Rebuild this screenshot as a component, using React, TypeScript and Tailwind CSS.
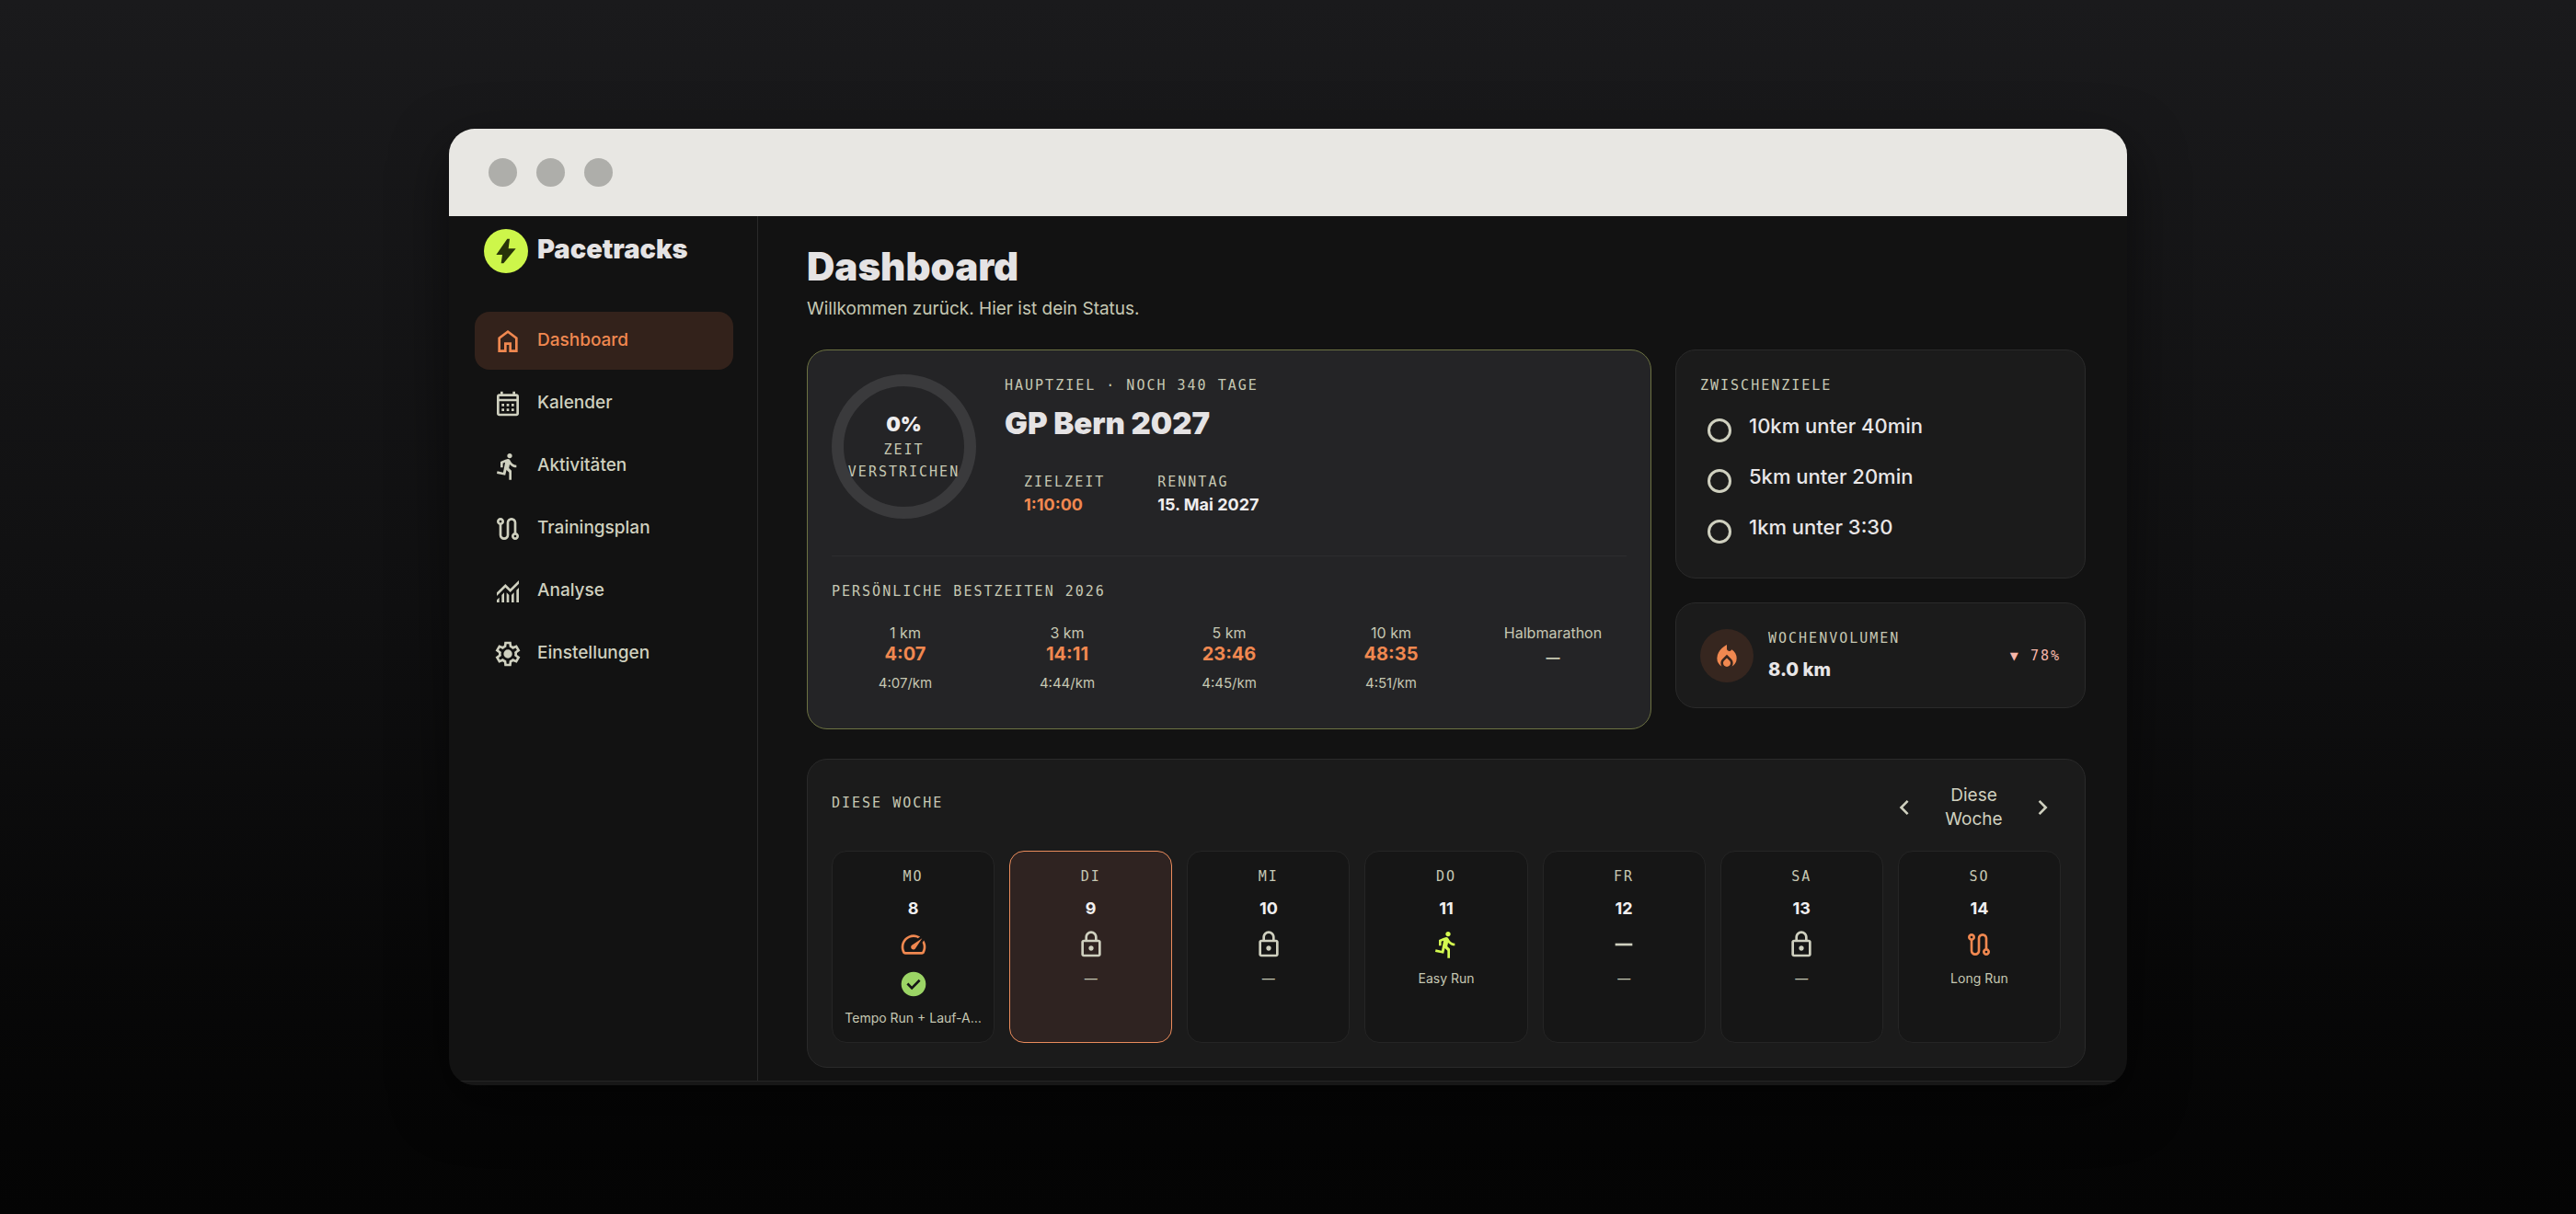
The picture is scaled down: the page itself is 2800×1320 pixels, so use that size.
import React from "react";
import clsx from "clsx";

const icons = {
  bolt: "m320-80 40-280H160l360-520h80l-40 320h240L400-80h-80Z",
  home: "M240-200h120v-240h240v240h120v-360L480-740 240-560v360Zm-80 80v-480l320-240 320 240v480H520v-240h-80v240H160Z",
  calendar:
    "M200-80q-33 0-56.5-23.5T120-160v-560q0-33 23.5-56.5T200-800h40v-80h80v80h320v-80h80v80h40q33 0 56.5 23.5T840-720v560q0 33-23.5 56.5T760-80H200Zm0-80h560v-400H200v400Zm0-480h560v-80H200v80Zm240 160h80v80h-80v-80Zm-160 0h80v80h-80v-80Zm320 0h80v80h-80v-80ZM440-320h80v80h-80v-80Zm-160 0h80v80h-80v-80Zm320 0h80v80h-80v-80Z",
  run: "M520-40v-240l-84-80-40 176-276-56 16-80 192 40 64-324-72 28v136h-80v-188l158-68q35-15 51.5-19.5T480-720q21 0 39 11t29 29l40 64q26 42 70.5 69T760-520v80q-66 0-123.5-27.5T540-540l-24 120 84 80v300h-80Zm-36.5-723.5Q460-787 460-820t23.5-56.5Q507-900 540-900t56.5 23.5Q620-853 620-820t-23.5 56.5Q573-740 540-740t-56.5-23.5Z",
  route:
    "M360-120q-66 0-113-47t-47-113v-327q-35-13-57.5-43.5T120-720q0-50 35-85t85-35q50 0 85 35t35 85q0 39-22.5 69.5T280-607v327q0 33 23.5 56.5T360-200q33 0 56.5-23.5T440-280v-400q0-66 47-113t113-47q66 0 113 47t47 113v327q35 13 57.5 43.5T840-240q0 50-35 85t-85 35q-50 0-85-35t-35-85q0-39 22.5-70t57.5-43v-327q0-33-23.5-56.5T600-760q-33 0-56.5 23.5T520-680v400q0 66-47 113t-113 47ZM240-680q17 0 28.5-11.5T280-720q0-17-11.5-28.5T240-760q-17 0-28.5 11.5T200-720q0 17 11.5 28.5T240-680Zm480 480q17 0 28.5-11.5T760-240q0-17-11.5-28.5T720-280q-17 0-28.5 11.5T680-240q0 17 11.5 28.5T720-200Z",
  chart:
    "M120-120v-80l80-80v160h-80Zm160 0v-240l80-80v320h-80Zm160 0v-320l80 81v239h-80Zm160 0v-239l80-80v319h-80Zm160 0v-400l80-80v480h-80ZM120-327v-113l280-280 160 160 280-280v113L560-447 400-607 120-327Z",
  settings:
    "m370-80-16-128q-13-5-24.5-12T307-235l-119 50L78-375l103-78q-1-7-1-13.5v-27q0-6.5 1-13.5L78-585l110-190 119 50q11-8 23-15t24-12l16-128h220l16 128q13 5 24.5 12t22.5 15l119-50 110 190-103 78q1 7 1 13.5v27q0 6.5-2 13.5l103 78-110 190-118-50q-11 8-23 15t-24 12L590-80H370Zm70-80h79l14-106q31-8 57.5-23.5T639-327l99 41 39-68-86-65q5-14 7-29.5t2-31.5q0-16-2-31.5t-7-29.5l86-65-39-68-99 42q-22-23-48.5-38.5T533-694l-13-106h-79l-14 106q-31 8-57.5 23.5T321-633l-99-41-39 68 86 64q-5 15-7 30t-2 32q0 16 2 31t7 30l-86 65 39 68 99-42q22 23 48.5 38.5T427-266l13 106Zm42-180q58 0 99-41t41-99q0-58-41-99t-99-41q-59 0-99.5 41T342-480q0 58 40.5 99t99.5 41Z",
  lock: "M240-80q-33 0-56.5-23.5T160-160v-400q0-33 23.5-56.5T240-640h40v-80q0-83 58.5-141.5T480-920q83 0 141.5 58.5T680-720v80h40q33 0 56.5 23.5T800-560v400q0 33-23.5 56.5T720-80H240Zm0-80h480v-400H240v400Zm240-120q33 0 56.5-23.5T560-360q0-33-23.5-56.5T480-440q-33 0-56.5 23.5T400-360q0 33 23.5 56.5T480-280ZM360-640h240v-80q0-50-35-85t-85-35q-50 0-85 35t-35 85v80Z",
  speed:
    "M418-340q24 24 62 23.5t56-27.5l224-336-336 224q-27 18-28.5 55t22.5 61Zm62-460q59 0 113.5 16.5T696-734l-76 48q-33-17-68.5-25.5T480-720q-133 0-226.5 93.5T160-400q0 42 11.5 83t32.5 77h552q23-38 33.5-79t10.5-85q0-36-8.5-70T766-540l48-76q30 47 47.5 100T880-406q1 57-13 109t-41 99q-11 18-30 28t-40 10H204q-21 0-40-10t-30-28q-26-45-40-95.5T80-400q0-83 31.5-155.5t86-127Q252-737 325-768.5T480-800Z",
  check:
    "m424-296 282-282-56-56-226 226-114-114-56 56 170 170Zm56 216q-83 0-156-31.5T197-197q-54-54-85.5-127T80-480q0-83 31.5-156T197-763q54-54 127-85.5T480-880q83 0 156 31.5T763-763q54 54 85.5 127T880-480q0 83-31.5 156T763-197q-54 54-127 85.5T480-80Z",
  fire: "M160-400q0-105 50-187t110-138q60-56 110-85.5l50-29.5v132q0 37 25 58.5t56 21.5q17 0 32.5-7t28.5-23l18-22q72 42 116 116.5T800-400q0 88-43 160.5T644-125q17-24 26.5-52.5T680-238q0-40-15-75.5T622-377L480-516 339-377q-29 29-44 64t-15 75q0 32 9.5 60.5T316-125q-70-42-113-114.5T160-400Zm320-4 85 83q17 17 26 38t9 45q0 49-35 83.5T480-120q-50 0-85-34.5T360-238q0-23 9-44.5t26-38.5l85-83Z",
  minus: "M200-440v-80h560v80H200Z",
  prev: "M560-240 320-480l240-240 56 56-184 184 184 184-56 56Z",
  next: "M504-480 320-664l56-56 240 240-240 240-56-56 184-184Z",
};

type IconName = keyof typeof icons;

const Icon = ({ name, className }: { name: IconName; className?: string }) => (
  <svg viewBox="0 -960 960 960" fill="currentColor" aria-hidden="true" className={clsx("size-8 shrink-0", className)}>
    <path d={icons[name]} />
  </svg>
);

const Label = ({ children, className }: { children: React.ReactNode; className?: string }) => (
  <div
    className={clsx(
      "font-['DejaVu_Sans_Mono',monospace] text-[15px] leading-6 tracking-[2px] uppercase text-[#c6c8b3]",
      className
    )}
  >
    {children}
  </div>
);

const navItems: { label: string; icon: IconName }[] = [
  { label: "Dashboard", icon: "home" },
  { label: "Kalender", icon: "calendar" },
  { label: "Aktivitäten", icon: "run" },
  { label: "Trainingsplan", icon: "route" },
  { label: "Analyse", icon: "chart" },
  { label: "Einstellungen", icon: "settings" },
];

const bests = [
  { distance: "1 km", time: "4:07", pace: "4:07/km" },
  { distance: "3 km", time: "14:11", pace: "4:44/km" },
  { distance: "5 km", time: "23:46", pace: "4:45/km" },
  { distance: "10 km", time: "48:35", pace: "4:51/km" },
  { distance: "Halbmarathon" },
];

const goals = ["10km unter 40min", "5km unter 20min", "1km unter 3:30"];

const days: { day: string; date: number; icon: IconName; color?: string; text: string; done?: boolean; today?: boolean }[] = [
  { day: "Mo", date: 8, icon: "speed", color: "text-[#f08850]", text: "Tempo Run + Lauf-A…", done: true },
  { day: "Di", date: 9, icon: "lock", text: "—", today: true },
  { day: "Mi", date: 10, icon: "lock", text: "—" },
  { day: "Do", date: 11, icon: "run", color: "text-[#d4fb50]", text: "Easy Run" },
  { day: "Fr", date: 12, icon: "minus", text: "—" },
  { day: "Sa", date: 13, icon: "lock", text: "—" },
  { day: "So", date: 14, icon: "route", color: "text-[#f08850]", text: "Long Run" },
];

const Sidebar = () => (
  <aside className="w-[336px] shrink-0 border-r border-[#2a2a2a] pl-7 pr-[26px] pt-[14px]">
    <div className="flex items-center gap-[10px] pl-[10px]">
      <span className="flex size-12 items-center justify-center rounded-full bg-[#cdf64a] text-[#28330a]">
        <Icon name="bolt" />
      </span>
      <span className="pb-1 text-[29px] leading-9 font-black text-[#e5e3e4]">Pacetracks</span>
    </div>
    <nav className="mt-[42px] flex flex-col gap-[5px]">
      {navItems.map(({ label, icon }, i) => (
        <a
          key={label}
          href="#"
          aria-current={i === 0 ? "page" : undefined}
          className={clsx(
            "flex h-[63px] items-center gap-4 rounded-2xl pl-5 text-[19px] font-medium",
            i === 0 ? "bg-[#33221b] text-[#f08850]" : "text-[#cfd0bf]"
          )}
        >
          <Icon name={icon} />
          {label}
        </a>
      ))}
    </nav>
  </aside>
);

const GoalCard = () => (
  <section className="min-w-0 flex-1 rounded-[22px] border border-[#6c7242] bg-[#242426] p-[26px] pb-[39px]">
    <div className="flex gap-[31px]">
      <div className="flex size-[157px] shrink-0 flex-col items-center justify-center rounded-full border-[13px] border-[#3a3a3c] text-center">
        <span className="mb-[2px] text-[22px] leading-7 font-black text-[#efedee]">0%</span>
        <Label>
          Zeit
          <br />
          verstrichen
        </Label>
      </div>
      <div>
        <Label>Hauptziel · noch 340 Tage</Label>
        <h2 className="mt-[11px] text-[33px] leading-9 font-black text-[#e5e3e4]">GP Bern 2027</h2>
        <dl className="mt-[34px] flex gap-[57px] pl-[21px] text-[18px] leading-[26px] font-bold">
          <div>
            <dt>
              <Label className="font-normal">Zielzeit</Label>
            </dt>
            <dd className="text-[#f08850]">1:10:00</dd>
          </div>
          <div>
            <dt>
              <Label className="font-normal">Renntag</Label>
            </dt>
            <dd className="text-[#efedee]">15. Mai 2027</dd>
          </div>
        </dl>
      </div>
    </div>
    <div className="mt-10 border-t border-[#2d2d2f] pt-[26px]">
      <Label>Persönliche Bestzeiten 2026</Label>
      <div className="mt-[22px] grid grid-cols-5 gap-4 text-center text-[#c6c8b3]">
        {bests.map((best) => (
          <div key={best.distance}>
            <p className="text-[16px] leading-[22px]">{best.distance}</p>
            {best.time ? (
              <>
                <p className="text-[20px] leading-6 font-bold text-[#f08850]">{best.time}</p>
                <p className="mt-[10px] text-[15px] leading-5">{best.pace}</p>
              </>
            ) : (
              <p className="pt-1 text-[15px] leading-6 font-bold">—</p>
            )}
          </div>
        ))}
      </div>
    </div>
  </section>
);

const SideCards = () => (
  <div className="flex w-[446px] shrink-0 flex-col gap-[26px]">
    <section className="rounded-[22px] border border-[#2a2a2a] bg-[#1b1b1b] p-[26px] pb-[37px]">
      <Label>Zwischenziele</Label>
      <div className="mt-[17px] flex flex-col gap-[22px] pl-2">
        {goals.map((goal) => (
          <label key={goal} className="flex items-start gap-[19px] text-[22px] leading-[30px] font-medium text-[#e8e6e7]">
            <input
              type="checkbox"
              className="mt-[7px] size-[26px] shrink-0 appearance-none rounded-full border-[3px] border-[#cfd0bf]"
            />
            {goal}
          </label>
        ))}
      </div>
    </section>
    <section className="flex items-center gap-4 rounded-[22px] border border-[#2a2a2a] bg-[#1b1b1b] p-[26px]">
      <span className="flex size-[58px] items-center justify-center rounded-full bg-[#36261f] text-[#f08850]">
        <Icon name="fire" />
      </span>
      <div className="flex-1">
        <Label>Wochenvolumen</Label>
        <p className="mt-[7px] text-[20px] leading-[30px] font-extrabold text-[#e8e6e7]">8.0 km</p>
      </div>
      <Label>
        <span className="text-[#f6b6a9]">▼ 78%</span>
      </Label>
    </section>
  </div>
);

const WeekCard = () => (
  <section className="mt-8 rounded-[22px] border border-[#2a2a2a] bg-[#1b1b1b] p-[26px]">
    <div className="flex items-center justify-between">
      <Label className="pb-[10px]">Diese Woche</Label>
      <div className="flex items-center text-[#cfd0bf]">
        <button type="button" aria-label="Vorherige Woche" className="flex w-[38px] justify-center">
          <Icon name="prev" />
        </button>
        <span className="w-[113px] px-5 text-center text-[19px] leading-[26px]">Diese Woche</span>
        <button type="button" aria-label="Nächste Woche" className="flex w-[38px] justify-center">
          <Icon name="next" />
        </button>
      </div>
    </div>
    <div className="mt-[21px] grid grid-cols-7 gap-4">
      {days.map(({ day, date, icon, color, text, done, today }) => (
        <div
          key={day}
          className={clsx(
            "flex min-w-0 flex-col items-center gap-[11px] rounded-2xl border px-2 pt-[15px] pb-4",
            today ? "border-[#ea8c5c] bg-[#2f2321]" : "border-[#252525] bg-[#161616]"
          )}
        >
          <Label>{day}</Label>
          <span className="text-[18px] leading-6 font-bold text-[#f1eff0]">{date}</span>
          <Icon name={icon} className={color ?? "text-[#cfd0bf]"} />
          {done && <Icon name="check" className="text-[#9bd465]" />}
          <span className="text-center text-[14px] leading-5 whitespace-nowrap text-[#c6c8b3]">{text}</span>
        </div>
      ))}
    </div>
  </section>
);

const App = () => {
  return (
    <div className="flex min-h-screen items-center justify-center bg-linear-to-b from-[#1a1a1c] via-[#101011] to-[#040404] font-[Inter,'Liberation_Sans',sans-serif]">
      <div className="w-full max-w-[1824px] overflow-hidden rounded-[28px] bg-[#121212] shadow-[0_20px_60px_rgba(0,0,0,0.5)]">
        <header className="flex h-[95px] items-center gap-[21px] bg-[#e8e7e3] pl-[43px]">
          <span className="size-[31px] rounded-full bg-[#aeaeaa]" />
          <span className="size-[31px] rounded-full bg-[#aeaeaa]" />
          <span className="size-[31px] rounded-full bg-[#aeaeaa]" />
        </header>
        <div className="flex">
          <Sidebar />
          <main className="min-w-0 flex-1 pt-[31px] pr-[45px] pb-[14px] pl-[53px]">
            <h1 className="text-[42px] leading-[48px] font-black text-[#e5e3e4]">Dashboard</h1>
            <p className="mt-[8px] text-[19px] leading-7 text-[#c6c8b3]">Willkommen zurück. Hier ist dein Status.</p>
            <div className="mt-[30px] flex items-start gap-[26px]">
              <GoalCard />
              <SideCards />
            </div>
            <WeekCard />
          </main>
        </div>
        <div className="h-[5px] border-t border-[#242424] bg-[#171717]" />
      </div>
    </div>
  );
};

export default App;
